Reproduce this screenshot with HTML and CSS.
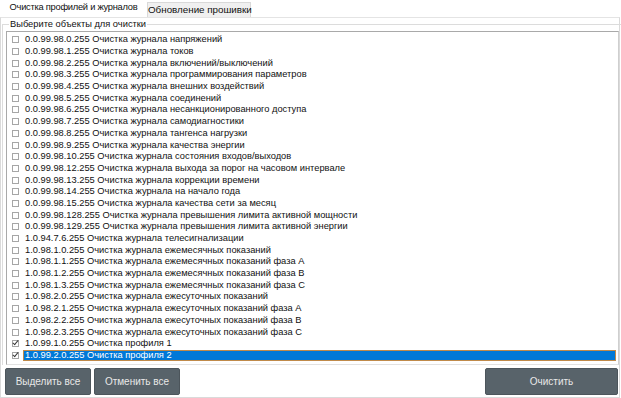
FILE: index.html
```html
<!DOCTYPE html>
<html lang="ru">
<head>
    <meta charset="UTF-8">
    <title>Очистка</title>
    <link rel="stylesheet" href="styles.css">
</head>
<body>
<div class="window">
    <div class="tabs">
        <div class="tab active">Очистка профилей и журналов</div>
        <div class="tab">Обновление прошивки</div>
    </div>

    <div class="pane">
        <fieldset class="group">
            <legend>Выберите объекты для очистки</legend>
            <ul class="list">
                <li><span class="check"></span><span class="label">0.0.99.98.0.255 Очистка журнала напряжений</span></li>
                <li><span class="check"></span><span class="label">0.0.99.98.1.255 Очистка журнала токов</span></li>
                <li><span class="check"></span><span class="label">0.0.99.98.2.255 Очистка журнала включений/выключений</span></li>
                <li><span class="check"></span><span class="label">0.0.99.98.3.255 Очистка журнала программирования параметров</span></li>
                <li><span class="check"></span><span class="label">0.0.99.98.4.255 Очистка журнала внешних воздействий</span></li>
                <li><span class="check"></span><span class="label">0.0.99.98.5.255 Очистка журнала соединений</span></li>
                <li><span class="check"></span><span class="label">0.0.99.98.6.255 Очистка журнала несанкционированного доступа</span></li>
                <li><span class="check"></span><span class="label">0.0.99.98.7.255 Очистка журнала самодиагностики</span></li>
                <li><span class="check"></span><span class="label">0.0.99.98.8.255 Очистка журнала тангенса нагрузки</span></li>
                <li><span class="check"></span><span class="label">0.0.99.98.9.255 Очистка журнала качества энергии</span></li>
                <li><span class="check"></span><span class="label">0.0.99.98.10.255 Очистка журнала состояния входов/выходов</span></li>
                <li><span class="check"></span><span class="label">0.0.99.98.12.255 Очистка журнала выхода за порог на часовом интервале</span></li>
                <li><span class="check"></span><span class="label">0.0.99.98.13.255 Очистка журнала коррекции времени</span></li>
                <li><span class="check"></span><span class="label">0.0.99.98.14.255 Очистка журнала на начало года</span></li>
                <li><span class="check"></span><span class="label">0.0.99.98.15.255 Очистка журнала качества сети за месяц</span></li>
                <li><span class="check"></span><span class="label">0.0.99.98.128.255 Очистка журнала превышения лимита активной мощности</span></li>
                <li><span class="check"></span><span class="label">0.0.99.98.129.255 Очистка журнала превышения лимита активной энергии</span></li>
                <li><span class="check"></span><span class="label">1.0.94.7.6.255 Очистка журнала телесигнализации</span></li>
                <li><span class="check"></span><span class="label">1.0.98.1.0.255 Очистка журнала ежемесячных показаний</span></li>
                <li><span class="check"></span><span class="label">1.0.98.1.1.255 Очистка журнала ежемесячных показаний фаза A</span></li>
                <li><span class="check"></span><span class="label">1.0.98.1.2.255 Очистка журнала ежемесячных показаний фаза B</span></li>
                <li><span class="check"></span><span class="label">1.0.98.1.3.255 Очистка журнала ежемесячных показаний фаза C</span></li>
                <li><span class="check"></span><span class="label">1.0.98.2.0.255 Очистка журнала ежесуточных показаний</span></li>
                <li><span class="check"></span><span class="label">1.0.98.2.1.255 Очистка журнала ежесуточных показаний фаза A</span></li>
                <li><span class="check"></span><span class="label">1.0.98.2.2.255 Очистка журнала ежесуточных показаний фаза B</span></li>
                <li><span class="check"></span><span class="label">1.0.98.2.3.255 Очистка журнала ежесуточных показаний фаза C</span></li>
                <li><span class="check checked"></span><span class="label">1.0.99.1.0.255 Очистка профиля 1</span></li>
                <li class="selected"><span class="check checked"></span><span class="label">1.0.99.2.0.255 Очистка профиля 2</span></li>
            </ul>
        </fieldset>

        <div class="buttons">
            <button class="btn btn-small">Выделить все</button>
            <button class="btn btn-small">Отменить все</button>
            <span class="spacer"></span>
            <button class="btn btn-wide">Очистить</button>
        </div>
    </div>
</div>
</body>
</html>
```

FILE: styles.css
```css
body {
    margin: 0;
    padding: 0;
    background: #ffffff;
    font-family: "Liberation Sans", Arial, sans-serif;
    font-size: 9.3px;
    color: #111111;
}

.window {
    width: 621px;
    height: 398px;
    display: flex;
    flex-direction: column;
    overflow: hidden;
}

/* Tabs */
.tabs {
    height: 17px;
    display: flex;
    align-items: flex-end;
}

.tab {
    width: 104px;
    height: 15px;
    line-height: 14px;
    text-align: center;
    background: #f0f0f0;
    border: 1px solid #d9d9d9;
    border-bottom: none;
    box-sizing: border-box;
    white-space: nowrap;
    font-size: 9.8px;
}

.tab.active {
    width: 147px;
    height: 17px;
    line-height: 15px;
    background: #ffffff;
    border: none;
    font-size: 9.3px;
    letter-spacing: -0.25px;
}

/* Pane */
.pane {
    width: 620px;
    height: 381px;
    box-sizing: border-box;
    border: 1px solid #dadada;
    border-top: 1px solid #e4e4e4;
    display: flex;
    flex-direction: column;
    background: #ffffff;
}

.group {
    margin: -1px 0 0 1px;
    padding: 0 2px 0 3px;
    border: 1px solid #dcdcdc;
    border-bottom: none;
    width: 618px;
    box-sizing: border-box;
}

.group legend {
    padding: 0 1px;
    margin-left: 3px;
    line-height: 14px;
}

/* List */
.list {
    list-style: none;
    margin: 0;
    padding: 2px 0 0 0;
    height: 334px;
    box-sizing: border-box;
    border: 1px solid #a9a9a9;
    border-right-color: #cfcfcf;
    border-bottom-color: #e2e2e2;
    background: #ffffff;
    width: 613px;
}

.list li {
    height: 11.7px;
    display: flex;
    align-items: center;
    white-space: nowrap;
    overflow: hidden;
}

.check {
    width: 5px;
    height: 5px;
    margin: 0 4px 0 5px;
    border: 1px solid #a6a6a6;
    background: #ffffff;
    flex: none;
    position: relative;
}

.check.checked::after {
    content: "";
    position: absolute;
    left: 1px;
    top: -2px;
    width: 2px;
    height: 5px;
    border: solid #3a3a3a;
    border-width: 0 1px 1px 0;
    transform: rotate(40deg);
}

.label {
    padding: 0 2px;
    height: 11px;
    line-height: 11px;
}

.list li.selected .label {
    flex: 1;
    background: #0078d7;
    color: #ffffff;
    outline: 1px solid #c08a4a;
    outline-offset: -1px;
    margin-right: 2px;
}

/* Buttons */
.buttons {
    display: flex;
    gap: 3px;
    padding: 3px 0 0 4px;
}

.spacer {
    flex: 1;
}

.btn {
    height: 27px;
    border: 1px solid #4c555b;
    border-radius: 2px;
    background: #58636a;
    color: #e8e8e8;
    font-family: "Liberation Sans", Arial, sans-serif;
    font-size: 10px;
    padding: 0;
}

.btn-small {
    width: 86px;
}

.btn-wide {
    width: 133px;
    margin-right: 1px;
}
```
